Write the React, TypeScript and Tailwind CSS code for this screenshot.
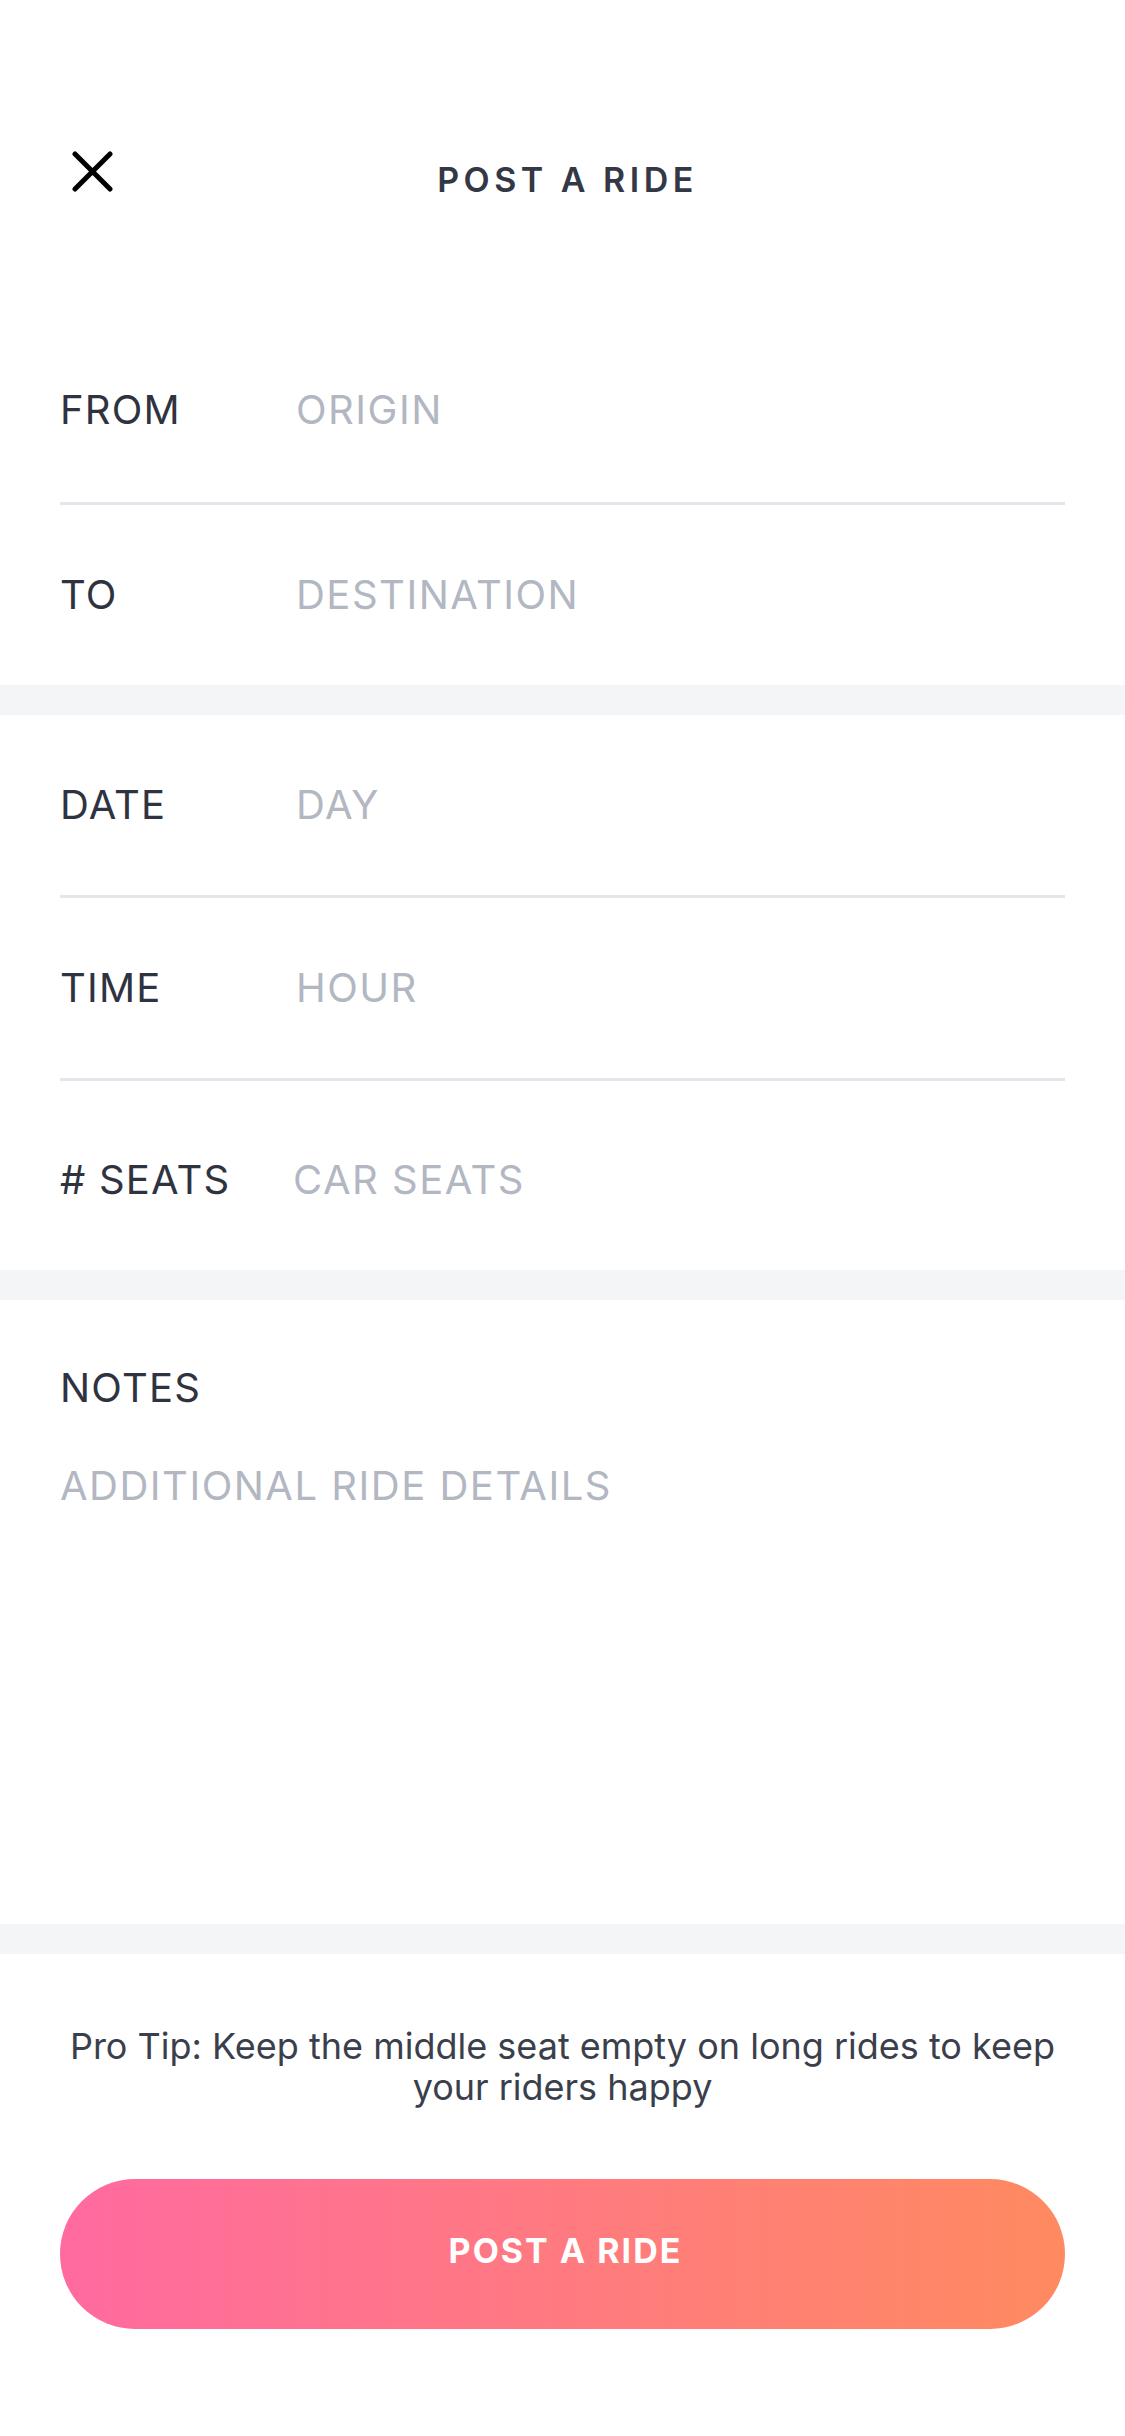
import React from "react";

const Row = ({ label, placeholder, h = "h-[180px]", phClass = "" }: { label: string; placeholder: string; h?: string; phClass?: string }) => (
  <div className={`flex items-center px-[60px] ${h}`}>
    <div className="w-[236px] shrink-0 text-[40px] tracking-[1.2px] text-[#2f3340]">{label}</div>
    <div className={`text-[40px] tracking-[1.5px] text-[#b2b7c2] ${phClass}`}>{placeholder}</div>
  </div>
);

const Sep = () => <div className="mx-[60px] h-[3px] bg-[#e4e6eb]" />;
const Band = () => <div className="h-[30px] bg-[#f4f5f7]" />;

export default function App() {
  return (
    <div className="w-[1125px] min-h-[2436px] bg-white" style={{ fontFamily: "Inter, 'Noto Sans', sans-serif" }}>
      {/* Header */}
      <div className="relative h-[322px]">
        <button className="absolute left-[72px] top-[151px] w-[41px] h-[41px]">
          <svg width="41" height="41" viewBox="0 0 41 41">
            <path d="M3 3 L38 38 M38 3 L3 38" stroke="#000" strokeWidth="5" strokeLinecap="round" />
          </svg>
        </button>
        <div className="pt-[160px] pl-[10px] text-center text-[34px] font-semibold tracking-[4.5px] text-[#343846] leading-[40px]">
          POST A RIDE
        </div>
      </div>

      <Row label="FROM" placeholder="ORIGIN" h="h-[180px] pb-[4px]" />
      <Sep />
      <Row label="TO" placeholder="DESTINATION" />
      <Band />

      <Row label="DATE" placeholder="DAY" />
      <Sep />
      <Row label="TIME" placeholder="HOUR" />
      <Sep />
      <Row label="# SEATS" placeholder="CAR SEATS" h="h-[189px] pt-[8px]" phClass="-ml-[3px]" />
      <Band />

      <div className="h-[624px] px-[60px] pt-[64px]">
        <div className="text-[40px] tracking-[1.2px] text-[#2f3340] leading-[48px]">NOTES</div>
        <div className="mt-[50px] text-[40px] tracking-[1.5px] text-[#b2b7c2] leading-[48px]">ADDITIONAL RIDE DETAILS</div>
      </div>
      <Band />

      <div className="px-[60px] pt-[72px]">
        <p className="text-center text-[36px] leading-[41px] text-[#3b3f4c]">
          Pro Tip: Keep the middle seat empty on long rides to keep your riders happy
        </p>
        <button
          className="mt-[71px] w-full h-[150px] pb-[8px] pl-[6px] rounded-full text-white text-[34px] font-bold tracking-[2px]"
          style={{ background: "linear-gradient(90deg, #ff6aa0 0%, #ff8a60 100%)" }}
        >
          POST A RIDE
        </button>
      </div>
    </div>
  );
}
